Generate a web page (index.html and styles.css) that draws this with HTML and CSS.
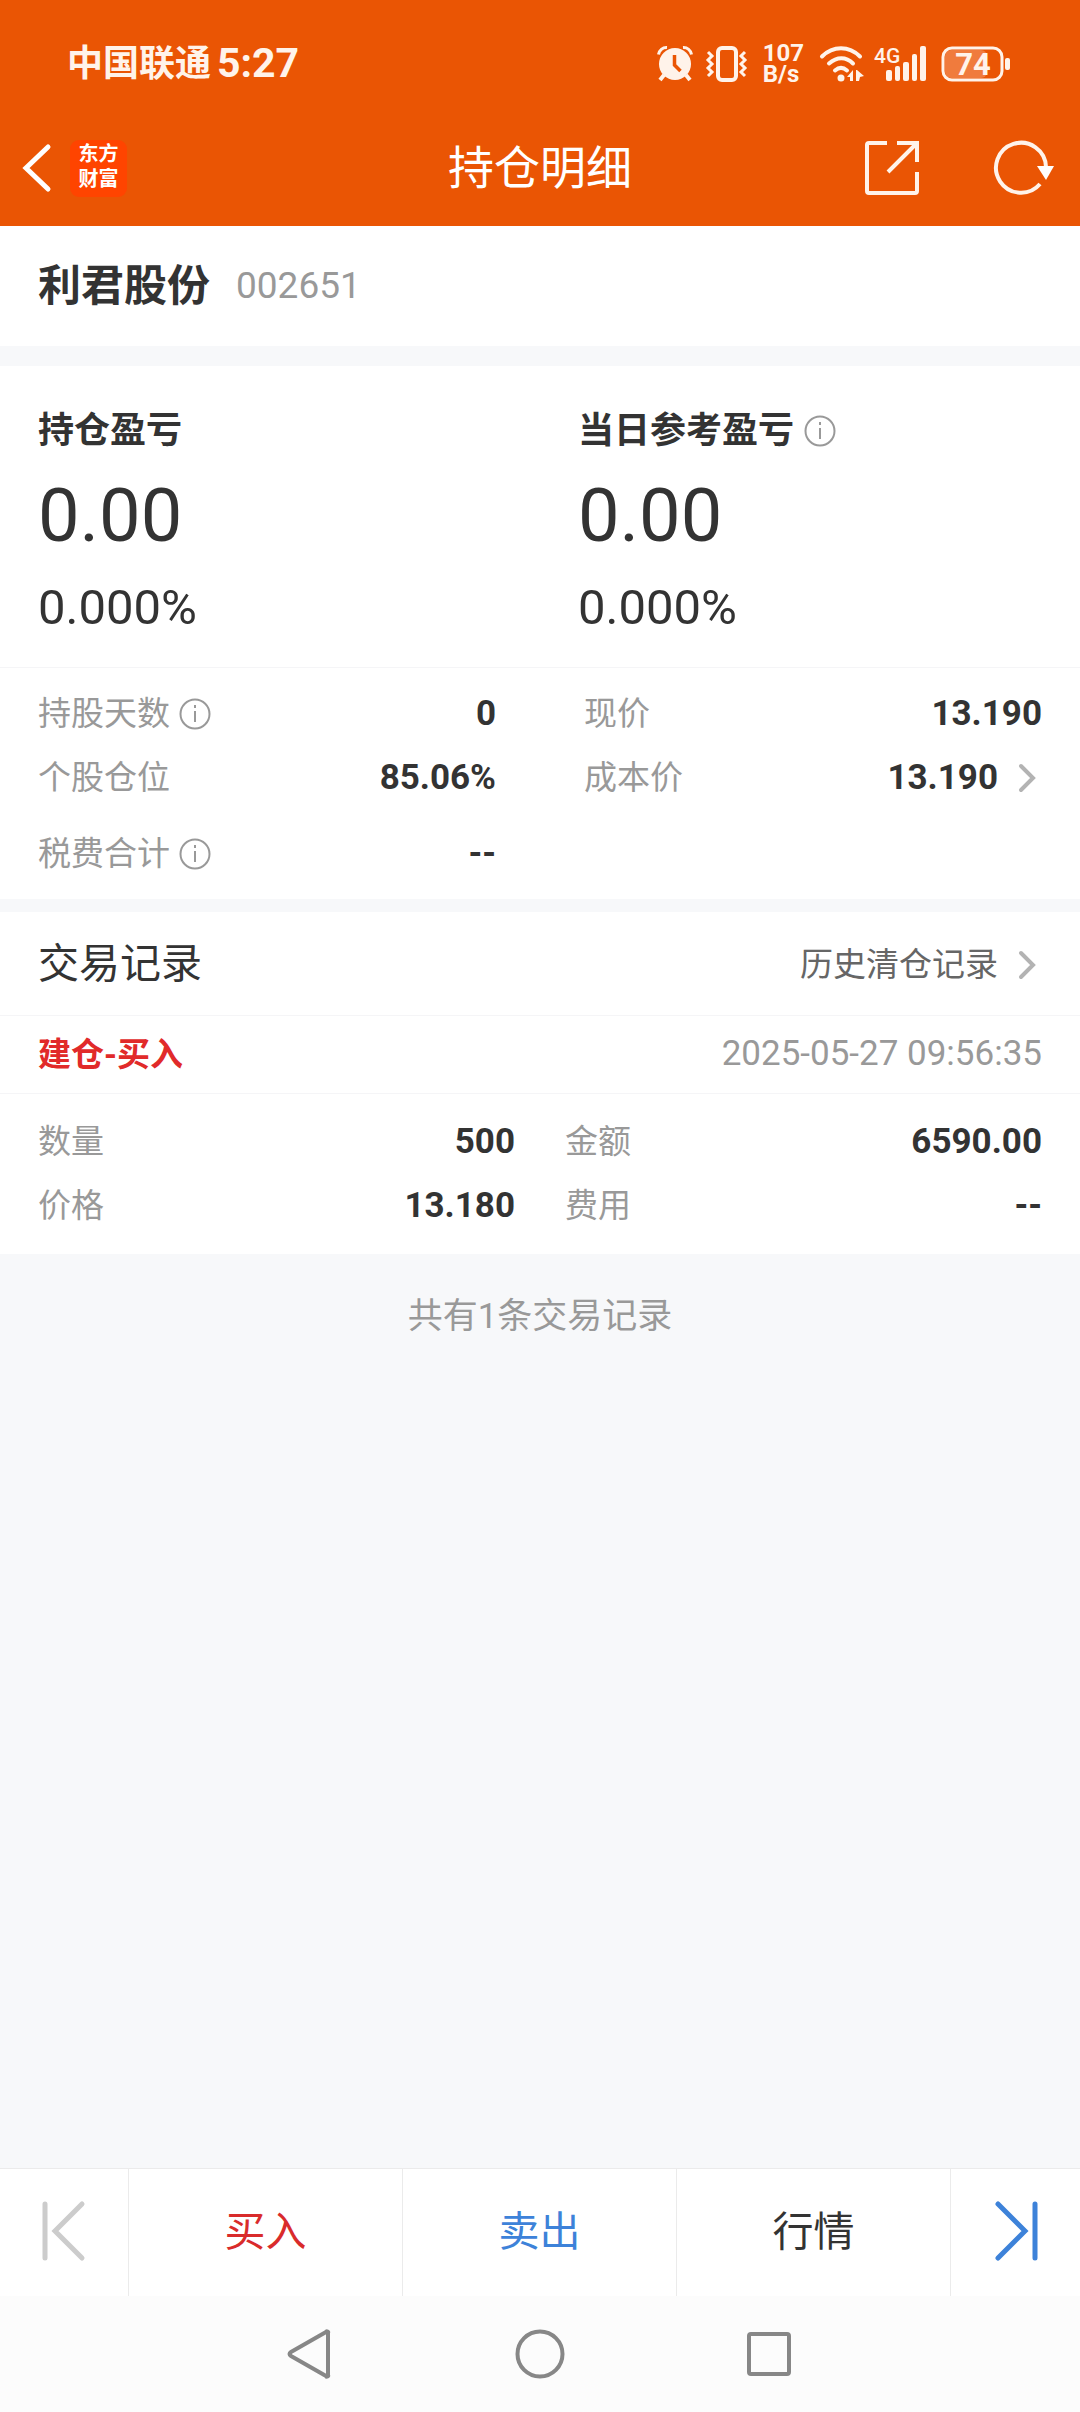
FILE: index.html
```html
<!DOCTYPE html>
<html lang="zh-CN">
<head>
    <meta charset="UTF-8">
    <meta name="viewport" content="width=device-width, initial-scale=1.0">
    <title>持仓明细</title>
    <link rel="stylesheet" href="styles.css">
</head>
<body>
    <!-- 状态栏 -->
    <div class="status-bar">
        <div class="carrier">中国联通 <span class="clock">5:27</span></div>
        <div class="status-icons">
            <svg class="icon-alarm" width="36" height="36" viewBox="0 0 36 36">
                <circle cx="18" cy="18" r="16" fill="#fff3ea"/>
                <path d="M1.500 8.500A8 8 0 0 1 10 1.500M34.500 8.500A8 8 0 0 0 26 1.500" stroke="#fff3ea" stroke-width="3" fill="none"/>
                <path d="M7 29l-4 5M29 29l4 5" stroke="#fff3ea" stroke-width="4"/>
                <path d="M17.500 9v10l6 6" stroke="#ea5504" stroke-width="3.500" fill="none"/>
            </svg>
            <svg class="icon-vibrate" width="41" height="36" viewBox="0 0 41 36" fill="none" stroke="#fff3ea">
                <rect x="12" y="2" width="18" height="32" rx="4" stroke-width="4"/>
                <path d="M2 6l4 4-4 4 4 4-4 4 4 4-4 4M39 6l-4 4 4 4-4 4 4 4-4 4 4 4" stroke-width="3"/>
            </svg>
            <div class="net-speed">107<br>B/s</div>
            <svg class="icon-wifi" width="46" height="36" viewBox="0 0 46 36" fill="none" stroke="#fff3ea" stroke-width="4" stroke-linecap="round">
                <path d="M3 10.500C14-.500 30-.500 41 10.500"/>
                <path d="M10 17.500C18 10.500 27 10.500 34 17.500"/>
                <path d="M16 24.500c4-3.500 8-3.500 12 0"/>
                <circle cx="22" cy="32" r="3.500" fill="#fff3ea" stroke="none"/>
                <path d="M34 24v11h-3v-4h-3zM38 24l7 6-4 1-1 4h-3V24z" fill="#fff3ea" stroke="none"/>
            </svg>
            <svg class="icon-signal" width="53" height="36" viewBox="0 0 53 36" fill="#fff3ea">
                <text class="signal-type" x="0" y="17">4G</text>
                <rect x="12" y="24" width="6" height="11" rx="2"/>
                <rect x="21" y="20" width="5" height="15" rx="2"/>
                <rect x="29" y="16" width="6" height="19" rx="2"/>
                <rect x="38" y="8" width="5" height="27" rx="2"/>
                <rect x="46" y="0" width="6" height="35" rx="2"/>
            </svg>
            <svg class="icon-battery" width="70" height="36" viewBox="0 0 70 36">
                <rect x="4" y="4" width="42" height="28" rx="6" fill="#f07b3d"/>
                <rect x="2" y="2" width="59" height="32" rx="9" fill="none" stroke="#fff3ea" stroke-width="3"/>
                <rect x="64" y="12" width="5" height="12" rx="2" fill="#fff3ea"/>
                <text class="battery-level" x="32" y="29">74</text>
            </svg>
        </div>
    </div>

    <header class="header">
        <div class="header-left">
            <button class="icon-btn" aria-label="返回">
                <svg width="26" height="48" viewBox="6 0 26 48" fill="none" stroke="#fff" stroke-width="5">
                    <path d="M28 3L6 24l22 21" stroke-linecap="round"/>
                </svg>
            </button>
            <a class="logo" href="#">东方<br>财富</a>
        </div>
        <h1 class="header-title">持仓明细</h1>
        <div class="header-right">
            <button class="icon-btn" aria-label="分享">
                <svg width="54" height="54" viewBox="0 0 54 54" fill="none" stroke="#fff3ea" stroke-width="4">
                    <path d="M22 2H4a2 2 0 0 0-2 2v46a2 2 0 0 0 2 2h46a2 2 0 0 0 2-2V31"/>
                    <path d="M32 2h20v19M51 3L23 31"/>
                </svg>
            </button>
            <button class="icon-btn" aria-label="刷新">
                <svg width="60" height="54" viewBox="0 0 60 54">
                    <path d="M52 26A25 25 0 1 0 46 43" fill="none" stroke="#fff3ea" stroke-width="4"/>
                    <path d="M43 25h17l-8 14z" fill="#fff"/>
                </svg>
            </button>
        </div>
    </header>

    <main class="content">
        <section class="stock">
            <h2 class="stock-name">利君股份</h2>
            <span class="stock-code">002651</span>
        </section>

        <!-- 盈亏 -->
        <section class="profit">
            <div class="profit-item">
                <h3 class="profit-title">持仓盈亏</h3>
                <div class="profit-value">0.00</div>
                <div class="profit-rate">0.000%</div>
            </div>
            <div class="profit-item">
                <h3 class="profit-title">当日参考盈亏
                    <button class="icon-btn" aria-label="说明">
                        <svg class="icon-info" viewBox="0 0 32 32"><circle cx="16" cy="16" r="14.500"/><path d="M16 13v11M16 7v3"/></svg>
                    </button>
                </h3>
                <div class="profit-value">0.00</div>
                <div class="profit-rate">0.000%</div>
            </div>
        </section>

        <section class="details">
            <dl class="list">
                <div class="row">
                    <dt>持股天数
                        <button class="icon-btn" aria-label="说明">
                            <svg class="icon-info" viewBox="0 0 32 32"><circle cx="16" cy="16" r="14.500"/><path d="M16 13v11M16 7v3"/></svg>
                        </button>
                    </dt>
                    <dd>0</dd>
                </div>
                <div class="row">
                    <dt>个股仓位</dt>
                    <dd>85.06%</dd>
                </div>
                <div class="row row-tax">
                    <dt>税费合计
                        <button class="icon-btn" aria-label="说明">
                            <svg class="icon-info" viewBox="0 0 32 32"><circle cx="16" cy="16" r="14.500"/><path d="M16 13v11M16 7v3"/></svg>
                        </button>
                    </dt>
                    <dd>--</dd>
                </div>
            </dl>
            <dl class="list">
                <div class="row">
                    <dt>现价</dt>
                    <dd>13.190</dd>
                </div>
                <div class="row">
                    <dt>成本价</dt>
                    <dd>
                        <a class="more" href="#">13.190
                            <svg class="icon-arrow" viewBox="0 0 24 32"><path d="M3 4l12 12L3 28"/></svg>
                        </a>
                    </dd>
                </div>
            </dl>
        </section>

        <!-- 交易记录 -->
        <section class="records">
            <div class="records-head">
                <h2 class="records-title">交易记录</h2>
                <a class="more history" href="#">历史清仓记录
                    <svg class="icon-arrow" viewBox="0 0 24 32"><path d="M3 4l12 12L3 28"/></svg>
                </a>
            </div>
            <div class="record-head">
                <strong class="record-type">建仓-买入</strong>
                <time class="record-time">2025-05-27 09:56:35</time>
            </div>
            <div class="record-body">
                <dl class="list">
                    <div class="row"><dt>数量</dt><dd>500</dd></div>
                    <div class="row"><dt>价格</dt><dd>13.180</dd></div>
                </dl>
                <dl class="list">
                    <div class="row"><dt>金额</dt><dd>6590.00</dd></div>
                    <div class="row"><dt>费用</dt><dd>--</dd></div>
                </dl>
            </div>
        </section>
        <p class="total">共有1条交易记录</p>
    </main>

    <nav class="toolbar">
        <button class="tool tool-side" aria-label="上一个">
            <svg width="44" height="62" viewBox="0 0 44 62" fill="none" stroke="#ccc" stroke-width="5" stroke-linecap="round">
                <path d="M3 4v54M40 4L13 31l27 27"/>
            </svg>
        </button>
        <button class="tool buy">买入</button>
        <button class="tool sell">卖出</button>
        <button class="tool">行情</button>
        <button class="tool tool-side" aria-label="下一个">
            <svg width="44" height="62" viewBox="0 0 44 62" fill="none" stroke="#3d82d9" stroke-width="5" stroke-linecap="round">
                <path d="M41 4v54M4 4l27 27L4 58"/>
            </svg>
        </button>
    </nav>

    <!-- 系统导航键 -->
    <div class="system-nav">
        <button class="icon-btn" aria-label="后退">
            <svg width="48" height="50" viewBox="0 0 48 50"><path d="M41 4v42a1 1 0 0 1-2 1L4 27q-3-2 0-4L39 3a1 1 0 0 1 2 1z"/></svg>
        </button>
        <button class="icon-btn" aria-label="主页">
            <svg width="50" height="50" viewBox="0 0 50 50"><circle cx="25" cy="25" r="22.500"/></svg>
        </button>
        <button class="icon-btn" aria-label="最近任务">
            <svg width="48" height="50" viewBox="0 0 48 50"><rect x="4" y="5" width="40" height="40" rx="2"/></svg>
        </button>
    </div>
</body>
</html>
```
FILE: styles.css
```css
* {
    box-sizing: border-box;
    margin: 0;
    padding: 0;
}
body {
    font-family: Roboto, "Noto Sans CJK SC", sans-serif;
    font-size: 33px;
    line-height: 1.5;
    color: #333;
    background-color: #f7f8fa;
    min-height: 100vh;
    display: flex;
    flex-direction: column;
}
a {
    color: inherit;
    text-decoration: none;
}
button {
    font: inherit;
    color: inherit;
    background: none;
    border: none;
    cursor: pointer;
}
svg {
    display: block;
    flex-shrink: 0;
    overflow: visible;
}
.icon-btn {
    display: flex;
}

/* 状态栏 */
.status-bar {
    display: flex;
    justify-content: space-between;
    align-items: center;
    height: 110px;
    padding: 18px 69px 0 67px;
    background-color: #ea5504;
    color: #fff3ea;
}
.carrier {
    display: flex;
    align-items: center;
    gap: 6px;
    font-size: 36px;
    font-weight: bold;
}
.clock {
    font-size: 41px;
    font-weight: 700;
}
.status-icons {
    display: flex;
    align-items: center;
}
.icon-vibrate {
    margin-left: 13px;
}
.net-speed {
    margin-left: 16px;
    font-size: 24px;
    line-height: 21px;
    font-weight: bold;
}
.icon-wifi {
    margin-left: 15px;
}
.icon-signal {
    margin-left: 9px;
}
.icon-battery {
    margin-left: 14px;
}
.signal-type {
    font-size: 21px;
    font-weight: 500;
}
.battery-level {
    font-size: 31px;
    font-weight: bold;
    fill: #fff3ea;
    text-anchor: middle;
}

/* 标题栏 */
.header {
    display: grid;
    grid-template-columns: 1fr auto 1fr;
    align-items: center;
    height: 116px;
    padding: 0 26px;
    background-color: #ea5504;
    color: #fff;
}
.header-left,
.header-right {
    display: flex;
    align-items: center;
}
.header-left {
    gap: 18px;
}
.header-right {
    justify-content: flex-end;
    gap: 75px;
}
.header-title {
    font-size: 46px;
    font-weight: 400;
}
.logo {
    width: 57px;
    height: 57px;
    padding-top: 2px;
    border-radius: 9px;
    background-color: #ff4400;
    font-size: 20px;
    line-height: 25px;
    font-weight: bold;
    text-align: center;
}

.stock {
    display: flex;
    align-items: center;
    gap: 26px;
    height: 120px;
    padding: 0 38px;
    background-color: #fff;
}
.stock-name {
    font-size: 43px;
}
.stock-code {
    font-size: 37px;
    color: #999;
}

/* 盈亏 */
.profit {
    display: grid;
    grid-template-columns: 1fr 1fr;
    margin-top: 20px;
    padding: 38px 0 25px;
    background-color: #fff;
    border-bottom: 1px solid #f5f5f7;
}
.profit-item {
    padding-left: 38px;
}
.profit-title {
    display: flex;
    align-items: center;
    gap: 10px;
    font-size: 36px;
    line-height: 54px;
}
.profit-value {
    font-size: 74px;
    line-height: 116px;
}
.profit-rate {
    font-size: 49px;
    line-height: 68px;
}
.icon-info {
    width: 32px;
    height: 32px;
    fill: none;
    stroke: #999;
    stroke-width: 2;
}
.icon-arrow {
    width: 24px;
    height: 32px;
    fill: none;
    stroke: #b3b3b3;
    stroke-width: 4;
    stroke-linecap: round;
}

/* 明细 */
.details,
.record-body {
    display: grid;
    grid-template-columns: 1fr 1fr;
    background-color: #fff;
}
.details {
    gap: 88px;
    padding: 14px 38px 13px;
}
.row {
    display: flex;
    justify-content: space-between;
    align-items: center;
    height: 64px;
}
.row-tax {
    margin-top: 12px;
}
dt {
    display: flex;
    align-items: center;
    gap: 9px;
    color: #999;
}
dd {
    font-size: 35px;
    font-weight: bold;
}
.more {
    display: flex;
    align-items: center;
    gap: 20px;
}

/* 交易记录 */
.records {
    margin-top: 13px;
    background-color: #fff;
}
.records-head,
.record-head {
    display: flex;
    justify-content: space-between;
    align-items: center;
    padding: 0 38px;
    border-bottom: 1px solid #f5f5f7;
}
.records-head {
    height: 104px;
    padding-top: 2px;
}
.record-head {
    height: 78px;
}
.records-title {
    font-size: 41px;
    font-weight: 400;
}
.history {
    color: #666;
}
.record-type {
    color: #e12a2a;
}
.record-time {
    font-size: 35px;
    color: #999;
}
.record-body {
    gap: 50px;
    padding: 16px 38px;
}
.total {
    padding: 36px 38px;
    font-size: 35px;
    line-height: 54px;
    color: #999;
    text-align: center;
}
.content {
    flex: 1;
}

/* 底部按钮 */
.toolbar {
    display: flex;
    height: 128px;
    background-color: #fff;
    border-top: 1px solid #ebebeb;
}
.tool {
    flex: 1;
    display: flex;
    justify-content: center;
    align-items: center;
    font-size: 41px;
    border-right: 1px solid #ebebeb;
}
.tool:last-child {
    border-right: none;
}
.tool-side {
    flex: 0 0 129px;
    padding-bottom: 4px;
}
.buy {
    color: #d92b2b;
}
.sell {
    color: #3d82d9;
}
.system-nav {
    display: flex;
    justify-content: center;
    align-items: center;
    gap: 180px;
    height: 116px;
    background-color: #fcfcfc;
}
.system-nav svg {
    fill: none;
    stroke: #878787;
    stroke-width: 4;
}
```
